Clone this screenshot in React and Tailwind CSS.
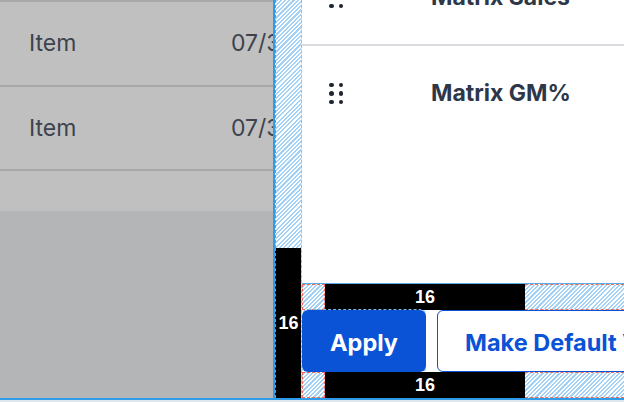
import React from "react";

function ItemRow({ h }) {
  return (
    <div className={`${h} shrink-0 bg-[#c0c0c0] flex items-center pl-[29px] whitespace-nowrap text-[23px] text-[#3d434d]`}>
      <span className="w-[202px] shrink-0">Item</span>
      <span>07/31/2024</span>
    </div>
  );
}

function Handle() {
  return (
    <div className="grid grid-cols-2 gap-x-[5px] gap-y-[4px] shrink-0">
      <span className="w-[4.5px] h-[4.5px] rounded-full bg-[#1c2430]" />
      <span className="w-[4.5px] h-[4.5px] rounded-full bg-[#1c2430]" />
      <span className="w-[4.5px] h-[4.5px] rounded-full bg-[#1c2430]" />
      <span className="w-[4.5px] h-[4.5px] rounded-full bg-[#1c2430]" />
      <span className="w-[4.5px] h-[4.5px] rounded-full bg-[#1c2430]" />
      <span className="w-[4.5px] h-[4.5px] rounded-full bg-[#1c2430]" />
    </div>
  );
}

function Band() {
  return (
    <div className="h-[26px] flex shrink-0">
      <div className="w-[23px] shrink-0 bg-[repeating-linear-gradient(135deg,#a3d2f6_0px,#a3d2f6_1.5px,#ffffff_1.5px,#ffffff_3px)] border border-dashed border-[#f06a5a]" />
      <div className="w-[200px] shrink-0 bg-black text-white font-bold text-[18px] font-['Liberation_Sans',sans-serif] flex items-center justify-center">
        16
      </div>
      <div className="flex-1 bg-[repeating-linear-gradient(135deg,#a3d2f6_0px,#a3d2f6_1.5px,#ffffff_1.5px,#ffffff_3px)] border-y border-dashed border-[#f06a5a]" />
    </div>
  );
}

export default function App() {
  return (
    <div className="w-[624px] h-[402px] overflow-hidden flex flex-col bg-[#dde6ee] font-['Inter',sans-serif]">
      <div className="h-[398px] flex shrink-0">
        {/* dimmed list */}
        <div className="w-[273px] shrink-0 flex flex-col bg-[#b4b5b7] overflow-hidden">
          <div className="h-[2px] shrink-0 bg-[#a7a8aa]" />
          <ItemRow h="h-[83px]" />
          <div className="h-[2px] shrink-0 bg-[#a7a8aa]" />
          <ItemRow h="h-[82px]" />
          <div className="h-[2px] shrink-0 bg-[#a7a8aa]" />
          <div className="h-[40px] shrink-0 bg-[#c0c0c0]" />
        </div>
        <div className="w-[2px] shrink-0 bg-[#2f9ce9]" />
        {/* padding column */}
        <div className="w-[27px] shrink-0 flex flex-col border-r border-dashed border-[#8cc8f2]">
          <div className="h-[248px] shrink-0 bg-[repeating-linear-gradient(135deg,#a3d2f6_0px,#a3d2f6_1.5px,#ffffff_1.5px,#ffffff_3px)] border-l border-dashed border-[#f06a5a]" />
          <div className="flex-1 bg-black flex items-center justify-center text-white font-bold text-[18px] font-['Liberation_Sans',sans-serif] border-l border-dashed border-[#f06a5a]">
            16
          </div>
        </div>
        {/* panel */}
        <div className="flex-1 flex flex-col overflow-hidden">
          <div className="h-[283px] shrink-0 bg-white overflow-hidden flex flex-col">
            <div className="-mt-[49px] h-[95px] shrink-0 flex items-center pl-[27px] border-b-2 border-[#dcdce0]">
              <Handle />
              <span className="ml-[88px] text-[23px] font-bold text-[#2d3748] whitespace-nowrap">Matrix Sales</span>
            </div>
            <div className="h-[95px] shrink-0 flex items-center pl-[27px]">
              <Handle />
              <span className="ml-[88px] text-[23px] font-bold text-[#2d3748] whitespace-nowrap">Matrix GM%</span>
            </div>
          </div>
          <div className="h-[1px] shrink-0 bg-[#5aaee8]" />
          <div className="flex-1 flex flex-col">
            <Band />
            <div className="h-[62px] shrink-0 flex bg-white">
              <button className="w-[124px] shrink-0 bg-[#0a52d6] text-white rounded-[6px] text-[23.5px] font-bold pt-[3px] outline outline-dashed outline-[#7dbcef]">
                Apply
              </button>
              <div className="w-[11px] shrink-0 bg-white" />
              <button className="w-[240px] shrink-0 border-[1.5px] border-[#0a52d6] rounded-[6px] text-[#0a52d6] text-[23.5px] font-bold text-left pl-[27px] pt-[3px] whitespace-nowrap">
                Make Default View
              </button>
            </div>
            <Band />
          </div>
        </div>
      </div>
      <div className="h-[2px] shrink-0 bg-[#2f9ce9]" />
      <div className="flex-1 bg-[#dfe7ee]" />
    </div>
  );
}
